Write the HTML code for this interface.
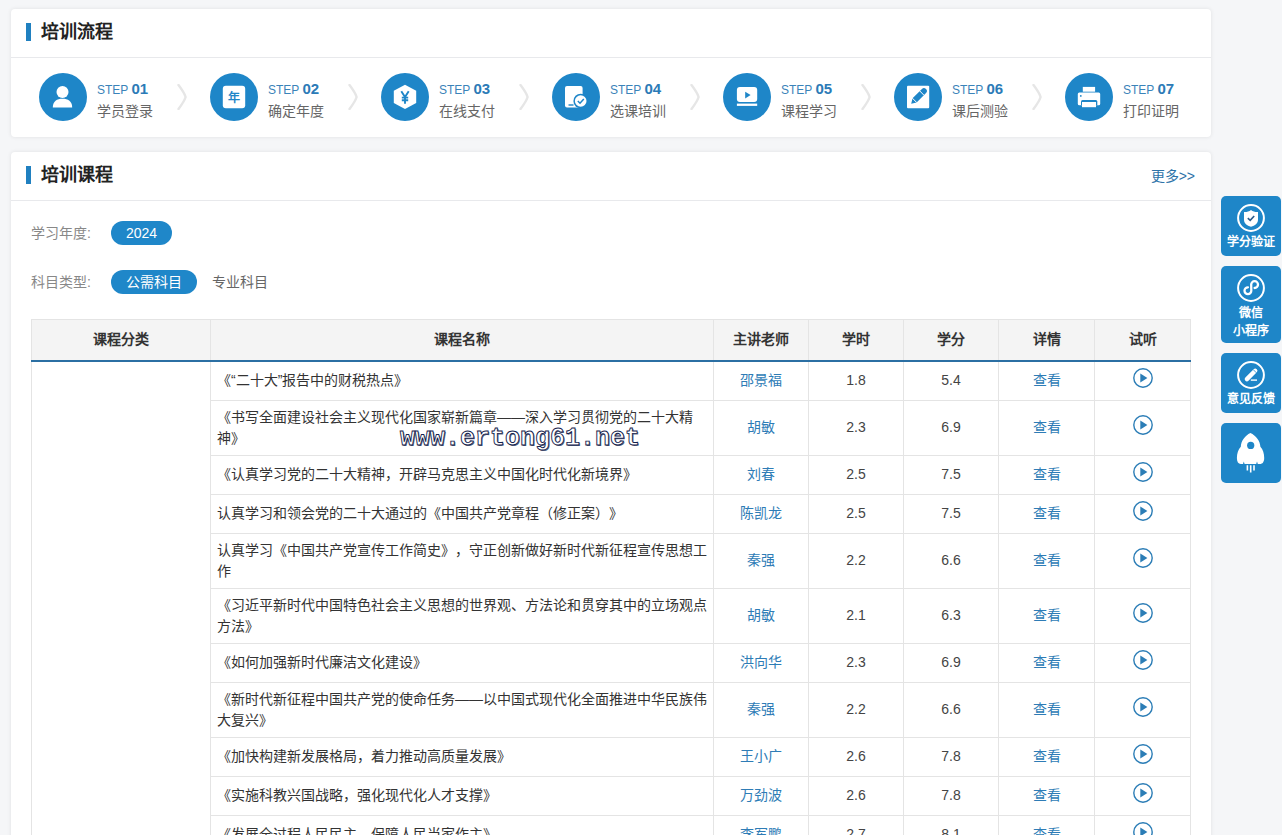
<!DOCTYPE html>
<html lang="zh-CN"><head><meta charset="utf-8">
<style>
*{margin:0;padding:0;box-sizing:border-box}
html,body{width:1282px;height:835px;overflow:hidden}
body{text-spacing-trim:space-all;background:#f5f6f8;font-family:"Liberation Sans",sans-serif;color:#333;position:relative}
.card{position:absolute;left:11px;width:1200px;background:#fff;border-radius:4px;box-shadow:0 0 4px rgba(0,0,0,0.09)}
.c1{top:9px;height:128px}
.c2{top:152px;height:720px}
.hd{position:absolute;left:0;top:0;width:1200px;height:49px;border-bottom:1px solid #e8e9ec}
.bar{position:absolute;left:15px;top:14px;width:5px;height:18px;background:#2080c0}
.ttl{position:absolute;left:30px;top:11px;font-size:18px;font-weight:bold;line-height:24px;color:#222}
.step{position:absolute;top:64px;height:48px}
.circ{position:absolute;left:0;top:0;width:48px;height:48px}
.st{position:absolute;left:58px;top:6px;white-space:nowrap;color:#3a83b9;font-size:12px;line-height:20px}
.st b{font-size:15px;color:#2b7bb7}
.sl{position:absolute;left:58px;top:28px;white-space:nowrap;color:#666;font-size:14px;line-height:20px}
.chev{position:absolute;top:11px;left:138px}
.more{position:absolute;right:16px;top:14px;font-size:14px;color:#2d73a8;line-height:20px}
.lab{position:absolute;left:20px;font-size:14px;color:#888;line-height:20px}
.pill{position:absolute;left:100px;height:24px;border-radius:12px;background:#1f87c9;color:#fff;font-size:14px;line-height:24px;padding:0 15px}
.opt{position:absolute;left:201px;font-size:14px;color:#666;line-height:20px}
.cell{position:absolute;display:flex;align-items:center;justify-content:center;text-align:center;font-size:14px;line-height:21px;color:#444;padding-bottom:2px}
.cell.th{font-weight:bold;color:#333;padding-bottom:1px}
.cell.n{justify-content:flex-start;text-align:left;padding:0 6px 2px;color:#333}
.cell.t,.cell.v{color:#2e7cb6}
.side{position:absolute;left:1221px;width:60px;background:#1e86c8;border-radius:5px;color:#fff;text-align:center;font-size:12px;line-height:18px;font-weight:bold}
.wm{position:absolute;left:400px;top:425px;font-family:"Liberation Mono",monospace;font-weight:bold;font-size:25px;line-height:28px;color:#fff;-webkit-text-stroke:0.9px #13224d;text-shadow:1px 1px 0 rgba(20,30,70,0.7);transform:scaleY(1.04);transform-origin:0 100%;white-space:nowrap}
</style></head><body>

<div class="card c1"><div class="hd"><div class="bar"></div><div class="ttl">培训流程</div></div>
<div class="step" style="left:28px"><svg class="circ" width="48" height="48" viewBox="0 0 48 48"><circle cx="24" cy="24" r="24" fill="#1e86c8"/><circle cx="23.5" cy="19" r="6" fill="#fff"/><path d="M13.8 34.4 C13.8 28.3 18 25.8 23.5 25.8 C29 25.8 33.2 28.3 33.2 34.4 Z" fill="#fff"/></svg><div class="st">STEP <b>01</b></div><div class="sl">学员登录</div><svg class="chev" width="12" height="26" viewBox="0 0 12 26"><path d="M1.5 1 Q7.5 9 8.6 13 Q7.5 17 1.5 25" stroke="#e6e6e6" stroke-width="2.4" fill="none" stroke-linecap="round"/></svg></div>
<div class="step" style="left:199px"><svg class="circ" width="48" height="48" viewBox="0 0 48 48"><circle cx="24" cy="24" r="24" fill="#1e86c8"/><rect x="12.8" y="12.8" width="22.4" height="22.4" rx="3" fill="#fff"/></svg><div style="position:absolute;left:13px;top:15px;width:22px;height:20px;text-align:center;font-size:12px;line-height:20px;font-weight:bold;color:#1e86c8">年</div><div class="st">STEP <b>02</b></div><div class="sl">确定年度</div><svg class="chev" width="12" height="26" viewBox="0 0 12 26"><path d="M1.5 1 Q7.5 9 8.6 13 Q7.5 17 1.5 25" stroke="#e6e6e6" stroke-width="2.4" fill="none" stroke-linecap="round"/></svg></div>
<div class="step" style="left:370px"><svg class="circ" width="48" height="48" viewBox="0 0 48 48"><circle cx="24" cy="24" r="24" fill="#1e86c8"/><path d="M24 11.7 L35.2 17.8 L35.2 30 L24 36.1 L12.8 30 L12.8 17.8 Z" fill="#fff"/><path d="M20.3 18.3 L24 24 L27.7 18.3 M24 24 L24 30.8 M20.8 24.6 H27.2 M20.8 27.3 H27.2" stroke="#1e86c8" stroke-width="1.9" fill="none"/></svg><div class="st">STEP <b>03</b></div><div class="sl">在线支付</div><svg class="chev" width="12" height="26" viewBox="0 0 12 26"><path d="M1.5 1 Q7.5 9 8.6 13 Q7.5 17 1.5 25" stroke="#e6e6e6" stroke-width="2.4" fill="none" stroke-linecap="round"/></svg></div>
<div class="step" style="left:541px"><svg class="circ" width="48" height="48" viewBox="0 0 48 48"><circle cx="24" cy="24" r="24" fill="#1e86c8"/><rect x="13" y="13" width="17.6" height="21.5" rx="2" fill="#fff"/><circle cx="28.7" cy="28" r="7.3" fill="#1e86c8"/><circle cx="28.7" cy="28" r="5.8" fill="#fff"/><path d="M25.8 28 L28 30.2 L31.8 25.9" stroke="#1e86c8" stroke-width="1.5" fill="none"/><path d="M16.5 32 H21.5" stroke="#1e86c8" stroke-width="1.4"/></svg><div class="st">STEP <b>04</b></div><div class="sl">选课培训</div><svg class="chev" width="12" height="26" viewBox="0 0 12 26"><path d="M1.5 1 Q7.5 9 8.6 13 Q7.5 17 1.5 25" stroke="#e6e6e6" stroke-width="2.4" fill="none" stroke-linecap="round"/></svg></div>
<div class="step" style="left:712px"><svg class="circ" width="48" height="48" viewBox="0 0 48 48"><circle cx="24" cy="24" r="24" fill="#1e86c8"/><rect x="13.9" y="13.9" width="20.3" height="15.1" rx="3" fill="#fff"/><path d="M22.2 18.7 L27.6 22.1 L22.2 25.5 Z" fill="#1e86c8"/><rect x="13.9" y="30.6" width="20.3" height="2.3" fill="#fff"/></svg><div class="st">STEP <b>05</b></div><div class="sl">课程学习</div><svg class="chev" width="12" height="26" viewBox="0 0 12 26"><path d="M1.5 1 Q7.5 9 8.6 13 Q7.5 17 1.5 25" stroke="#e6e6e6" stroke-width="2.4" fill="none" stroke-linecap="round"/></svg></div>
<div class="step" style="left:883px"><svg class="circ" width="48" height="48" viewBox="0 0 48 48"><circle cx="24" cy="24" r="24" fill="#1e86c8"/><rect x="13" y="12.8" width="22.2" height="22.4" rx="1" fill="#fff"/><path d="M17.2 30.8 L18.53 25.37 L27.95 15.95 A2.9 2.9 0 0 1 32.05 20.05 L22.63 29.47 Z" fill="#1e86c8"/><path d="M25.8 18.0 L29.96 22.24 M18.3 25.1 L22.9 29.7" stroke="#fff" stroke-width="1"/></svg><div class="st">STEP <b>06</b></div><div class="sl">课后测验</div><svg class="chev" width="12" height="26" viewBox="0 0 12 26"><path d="M1.5 1 Q7.5 9 8.6 13 Q7.5 17 1.5 25" stroke="#e6e6e6" stroke-width="2.4" fill="none" stroke-linecap="round"/></svg></div>
<div class="step" style="left:1054px"><svg class="circ" width="48" height="48" viewBox="0 0 48 48"><circle cx="24" cy="24" r="24" fill="#1e86c8"/><rect x="17.8" y="13.9" width="12.3" height="4.8" fill="#fff"/><rect x="12.8" y="19.6" width="22.4" height="12.7" rx="1.5" fill="#fff"/><circle cx="15.8" cy="22.9" r="0.9" fill="#1e86c8"/><path d="M16 32.3 V28.5 Q16 27 17.5 27 H30.8 Q32.3 27 32.3 28.5 V32.3 Z" fill="#1e86c8"/><rect x="17" y="29" width="14" height="5.2" fill="#fff"/></svg><div class="st">STEP <b>07</b></div><div class="sl">打印证明</div></div>
</div>
<div class="card c2"><div class="hd"><div class="bar"></div><div class="ttl">培训课程</div><div class="more">更多&gt;&gt;</div></div>
<div class="lab" style="top:71px">学习年度:</div><div class="pill" style="top:69px">2024</div>
<div class="lab" style="top:120px">科目类型:</div><div class="pill" style="top:118px">公需科目</div><div class="opt" style="top:120px">专业科目</div>
</div>
<div style="position:absolute;left:31px;top:319px;width:1160px;height:1px;background:#e4e4e4"></div><div style="position:absolute;left:32px;top:320px;width:1158px;height:40px;background:#f4f4f4"></div><div class="cell th" style="left:32px;top:320px;width:178px;height:40px">课程分类</div><div class="cell th" style="left:211px;top:320px;width:502px;height:40px">课程名称</div><div class="cell th" style="left:714px;top:320px;width:94px;height:40px">主讲老师</div><div class="cell th" style="left:809px;top:320px;width:94px;height:40px">学时</div><div class="cell th" style="left:904px;top:320px;width:94px;height:40px">学分</div><div class="cell th" style="left:999px;top:320px;width:95px;height:40px">详情</div><div class="cell th" style="left:1095px;top:320px;width:95px;height:40px">试听</div><div class="cell n" style="left:211px;top:362px;width:502px;height:38px">《“二十大”报告中的财税热点》</div><div class="cell t" style="left:714px;top:362px;width:94px;height:38px">邵景福</div><div class="cell " style="left:809px;top:362px;width:94px;height:38px">1.8</div><div class="cell " style="left:904px;top:362px;width:94px;height:38px">5.4</div><div class="cell v" style="left:999px;top:362px;width:95px;height:38px">查看</div><div class="cell p" style="left:1095px;top:362px;width:95px;height:38px"><svg width="20" height="20" viewBox="0 0 20 20" style="display:block;margin-top:-4px"><circle cx="10" cy="10" r="9.2" stroke="#2b7db6" stroke-width="1.4" fill="none"/><path d="M7.3 5.5 L14.4 10 L7.3 14.5 Z" fill="#2b7db6"/></svg></div><div style="position:absolute;left:211px;top:400px;width:980px;height:1px;background:#e4e4e4"></div><div class="cell n" style="left:211px;top:401px;width:502px;height:54px;padding-bottom:0">《书写全面建设社会主义现代化国家崭新篇章——深入学习贯彻党的二十大精神》</div><div class="cell t" style="left:714px;top:401px;width:94px;height:54px">胡敏</div><div class="cell " style="left:809px;top:401px;width:94px;height:54px">2.3</div><div class="cell " style="left:904px;top:401px;width:94px;height:54px">6.9</div><div class="cell v" style="left:999px;top:401px;width:95px;height:54px">查看</div><div class="cell p" style="left:1095px;top:401px;width:95px;height:54px"><svg width="20" height="20" viewBox="0 0 20 20" style="display:block;margin-top:-4px"><circle cx="10" cy="10" r="9.2" stroke="#2b7db6" stroke-width="1.4" fill="none"/><path d="M7.3 5.5 L14.4 10 L7.3 14.5 Z" fill="#2b7db6"/></svg></div><div style="position:absolute;left:211px;top:455px;width:980px;height:1px;background:#e4e4e4"></div><div class="cell n" style="left:211px;top:456px;width:502px;height:38px">《认真学习党的二十大精神，开辟马克思主义中国化时代化新境界》</div><div class="cell t" style="left:714px;top:456px;width:94px;height:38px">刘春</div><div class="cell " style="left:809px;top:456px;width:94px;height:38px">2.5</div><div class="cell " style="left:904px;top:456px;width:94px;height:38px">7.5</div><div class="cell v" style="left:999px;top:456px;width:95px;height:38px">查看</div><div class="cell p" style="left:1095px;top:456px;width:95px;height:38px"><svg width="20" height="20" viewBox="0 0 20 20" style="display:block;margin-top:-4px"><circle cx="10" cy="10" r="9.2" stroke="#2b7db6" stroke-width="1.4" fill="none"/><path d="M7.3 5.5 L14.4 10 L7.3 14.5 Z" fill="#2b7db6"/></svg></div><div style="position:absolute;left:211px;top:494px;width:980px;height:1px;background:#e4e4e4"></div><div class="cell n" style="left:211px;top:495px;width:502px;height:38px">认真学习和领会党的二十大通过的《中国共产党章程（修正案）》</div><div class="cell t" style="left:714px;top:495px;width:94px;height:38px">陈凯龙</div><div class="cell " style="left:809px;top:495px;width:94px;height:38px">2.5</div><div class="cell " style="left:904px;top:495px;width:94px;height:38px">7.5</div><div class="cell v" style="left:999px;top:495px;width:95px;height:38px">查看</div><div class="cell p" style="left:1095px;top:495px;width:95px;height:38px"><svg width="20" height="20" viewBox="0 0 20 20" style="display:block;margin-top:-4px"><circle cx="10" cy="10" r="9.2" stroke="#2b7db6" stroke-width="1.4" fill="none"/><path d="M7.3 5.5 L14.4 10 L7.3 14.5 Z" fill="#2b7db6"/></svg></div><div style="position:absolute;left:211px;top:533px;width:980px;height:1px;background:#e4e4e4"></div><div class="cell n" style="left:211px;top:534px;width:502px;height:54px;padding-bottom:0">认真学习《中国共产党宣传工作简史》，守正创新做好新时代新征程宣传思想工作</div><div class="cell t" style="left:714px;top:534px;width:94px;height:54px">秦强</div><div class="cell " style="left:809px;top:534px;width:94px;height:54px">2.2</div><div class="cell " style="left:904px;top:534px;width:94px;height:54px">6.6</div><div class="cell v" style="left:999px;top:534px;width:95px;height:54px">查看</div><div class="cell p" style="left:1095px;top:534px;width:95px;height:54px"><svg width="20" height="20" viewBox="0 0 20 20" style="display:block;margin-top:-4px"><circle cx="10" cy="10" r="9.2" stroke="#2b7db6" stroke-width="1.4" fill="none"/><path d="M7.3 5.5 L14.4 10 L7.3 14.5 Z" fill="#2b7db6"/></svg></div><div style="position:absolute;left:211px;top:588px;width:980px;height:1px;background:#e4e4e4"></div><div class="cell n" style="left:211px;top:589px;width:502px;height:54px;padding-bottom:0">《习近平新时代中国特色社会主义思想的世界观、方法论和贯穿其中的立场观点方法》</div><div class="cell t" style="left:714px;top:589px;width:94px;height:54px">胡敏</div><div class="cell " style="left:809px;top:589px;width:94px;height:54px">2.1</div><div class="cell " style="left:904px;top:589px;width:94px;height:54px">6.3</div><div class="cell v" style="left:999px;top:589px;width:95px;height:54px">查看</div><div class="cell p" style="left:1095px;top:589px;width:95px;height:54px"><svg width="20" height="20" viewBox="0 0 20 20" style="display:block;margin-top:-4px"><circle cx="10" cy="10" r="9.2" stroke="#2b7db6" stroke-width="1.4" fill="none"/><path d="M7.3 5.5 L14.4 10 L7.3 14.5 Z" fill="#2b7db6"/></svg></div><div style="position:absolute;left:211px;top:643px;width:980px;height:1px;background:#e4e4e4"></div><div class="cell n" style="left:211px;top:644px;width:502px;height:38px">《如何加强新时代廉洁文化建设》</div><div class="cell t" style="left:714px;top:644px;width:94px;height:38px">洪向华</div><div class="cell " style="left:809px;top:644px;width:94px;height:38px">2.3</div><div class="cell " style="left:904px;top:644px;width:94px;height:38px">6.9</div><div class="cell v" style="left:999px;top:644px;width:95px;height:38px">查看</div><div class="cell p" style="left:1095px;top:644px;width:95px;height:38px"><svg width="20" height="20" viewBox="0 0 20 20" style="display:block;margin-top:-4px"><circle cx="10" cy="10" r="9.2" stroke="#2b7db6" stroke-width="1.4" fill="none"/><path d="M7.3 5.5 L14.4 10 L7.3 14.5 Z" fill="#2b7db6"/></svg></div><div style="position:absolute;left:211px;top:682px;width:980px;height:1px;background:#e4e4e4"></div><div class="cell n" style="left:211px;top:683px;width:502px;height:54px;padding-bottom:0">《新时代新征程中国共产党的使命任务——以中国式现代化全面推进中华民族伟大复兴》</div><div class="cell t" style="left:714px;top:683px;width:94px;height:54px">秦强</div><div class="cell " style="left:809px;top:683px;width:94px;height:54px">2.2</div><div class="cell " style="left:904px;top:683px;width:94px;height:54px">6.6</div><div class="cell v" style="left:999px;top:683px;width:95px;height:54px">查看</div><div class="cell p" style="left:1095px;top:683px;width:95px;height:54px"><svg width="20" height="20" viewBox="0 0 20 20" style="display:block;margin-top:-4px"><circle cx="10" cy="10" r="9.2" stroke="#2b7db6" stroke-width="1.4" fill="none"/><path d="M7.3 5.5 L14.4 10 L7.3 14.5 Z" fill="#2b7db6"/></svg></div><div style="position:absolute;left:211px;top:737px;width:980px;height:1px;background:#e4e4e4"></div><div class="cell n" style="left:211px;top:738px;width:502px;height:38px">《加快构建新发展格局，着力推动高质量发展》</div><div class="cell t" style="left:714px;top:738px;width:94px;height:38px">王小广</div><div class="cell " style="left:809px;top:738px;width:94px;height:38px">2.6</div><div class="cell " style="left:904px;top:738px;width:94px;height:38px">7.8</div><div class="cell v" style="left:999px;top:738px;width:95px;height:38px">查看</div><div class="cell p" style="left:1095px;top:738px;width:95px;height:38px"><svg width="20" height="20" viewBox="0 0 20 20" style="display:block;margin-top:-4px"><circle cx="10" cy="10" r="9.2" stroke="#2b7db6" stroke-width="1.4" fill="none"/><path d="M7.3 5.5 L14.4 10 L7.3 14.5 Z" fill="#2b7db6"/></svg></div><div style="position:absolute;left:211px;top:776px;width:980px;height:1px;background:#e4e4e4"></div><div class="cell n" style="left:211px;top:777px;width:502px;height:38px">《实施科教兴国战略，强化现代化人才支撑》</div><div class="cell t" style="left:714px;top:777px;width:94px;height:38px">万劲波</div><div class="cell " style="left:809px;top:777px;width:94px;height:38px">2.6</div><div class="cell " style="left:904px;top:777px;width:94px;height:38px">7.8</div><div class="cell v" style="left:999px;top:777px;width:95px;height:38px">查看</div><div class="cell p" style="left:1095px;top:777px;width:95px;height:38px"><svg width="20" height="20" viewBox="0 0 20 20" style="display:block;margin-top:-4px"><circle cx="10" cy="10" r="9.2" stroke="#2b7db6" stroke-width="1.4" fill="none"/><path d="M7.3 5.5 L14.4 10 L7.3 14.5 Z" fill="#2b7db6"/></svg></div><div style="position:absolute;left:211px;top:815px;width:980px;height:1px;background:#e4e4e4"></div><div class="cell n" style="left:211px;top:816px;width:502px;height:38px">《发展全过程人民民主，保障人民当家作主》</div><div class="cell t" style="left:714px;top:816px;width:94px;height:38px">李军鹏</div><div class="cell " style="left:809px;top:816px;width:94px;height:38px">2.7</div><div class="cell " style="left:904px;top:816px;width:94px;height:38px">8.1</div><div class="cell v" style="left:999px;top:816px;width:95px;height:38px">查看</div><div class="cell p" style="left:1095px;top:816px;width:95px;height:38px"><svg width="20" height="20" viewBox="0 0 20 20" style="display:block;margin-top:-4px"><circle cx="10" cy="10" r="9.2" stroke="#2b7db6" stroke-width="1.4" fill="none"/><path d="M7.3 5.5 L14.4 10 L7.3 14.5 Z" fill="#2b7db6"/></svg></div><div style="position:absolute;left:211px;top:854px;width:980px;height:1px;background:#e4e4e4"></div><div style="position:absolute;left:31px;top:319px;width:1px;height:581px;background:#e4e4e4"></div><div style="position:absolute;left:210px;top:319px;width:1px;height:581px;background:#e4e4e4"></div><div style="position:absolute;left:713px;top:319px;width:1px;height:581px;background:#e4e4e4"></div><div style="position:absolute;left:808px;top:319px;width:1px;height:581px;background:#e4e4e4"></div><div style="position:absolute;left:903px;top:319px;width:1px;height:581px;background:#e4e4e4"></div><div style="position:absolute;left:998px;top:319px;width:1px;height:581px;background:#e4e4e4"></div><div style="position:absolute;left:1094px;top:319px;width:1px;height:581px;background:#e4e4e4"></div><div style="position:absolute;left:1190px;top:319px;width:1px;height:581px;background:#e4e4e4"></div><div style="position:absolute;left:31px;top:360px;width:1160px;height:2px;background:#2b6fa3"></div>
<div class="side" style="top:196px;height:60px"><svg width="28" height="28" viewBox="0 0 28 28" style="position:absolute;left:16px;top:8px"><circle cx="14" cy="14" r="12.9" stroke="#fff" stroke-width="2" fill="none"/><path d="M14 6 C16 7.5 18.5 8.2 21 8 V15.5 C21 19.5 18 21.8 14 22.7 C10 21.8 7 19.5 7 15.5 V8 C9.5 8.2 12 7.5 14 6 Z" fill="#fff"/><path d="M10.8 14.2 L13.2 16.4 L17.2 12" stroke="#2a5a8a" stroke-width="1.6" fill="none"/></svg><div style="position:absolute;left:0;width:60px;top:37px">学分验证</div></div>
<div class="side" style="top:266px;height:77px"><svg width="28" height="28" viewBox="0 0 28 28" style="position:absolute;left:16px;top:8px"><circle cx="14" cy="14" r="12.9" stroke="#fff" stroke-width="2" fill="none"/><path d="M10.95 13.3 A3.4 3.4 0 1 0 14.3 16.7 L14.2 10.6 A3.4 3.4 0 1 1 17.6 14" stroke="#fff" stroke-width="2.3" fill="none" stroke-linecap="round"/></svg><div style="position:absolute;left:0;width:60px;top:38px">微信<br>小程序</div></div>
<div class="side" style="top:353px;height:60px"><svg width="28" height="28" viewBox="0 0 28 28" style="position:absolute;left:16px;top:8px"><circle cx="14" cy="14" r="12.9" stroke="#fff" stroke-width="2" fill="none"/><path d="M9.9 18.1 L18.2 9.8" stroke="#fff" stroke-width="4.4" stroke-linecap="round"/><path d="M16.2 8.6 L19.4 11.8" stroke="#1e86c8" stroke-width="0.8"/><path d="M13.8 19.1 H20" stroke="#fff" stroke-width="1.4"/></svg><div style="position:absolute;left:0;width:60px;top:37px">意见反馈</div></div>
<div class="side" style="top:423px;height:60px"><svg width="30" height="42" viewBox="0 0 30 42" style="position:absolute;left:15px;top:9px"><path d="M14.4 0.9 C20 3.5 24.2 9 24.4 14.7 C27 17.5 28.2 21.5 28.2 25.9 C28.2 29.8 26.5 31.9 24 31.9 L21.8 31.9 L21 29.6 L20.2 31.9 L8.6 31.9 L7.8 29.6 L7 31.9 L4.8 31.9 C2.3 31.9 0.9 29.8 0.9 25.9 C0.9 21.5 2.2 17.5 4.8 14.7 C5 9 9 3.5 14.4 0.9 Z" fill="#fff"/><circle cx="14.7" cy="13.4" r="3.6" fill="#1e86c8"/><path d="M11.4 33.2 V38.5 M14.7 33.2 V40.4 M18 33.2 V38.5" stroke="#fff" stroke-width="1.6"/></svg></div>
<div class="wm">www.ertong61.net</div>
</body></html>
